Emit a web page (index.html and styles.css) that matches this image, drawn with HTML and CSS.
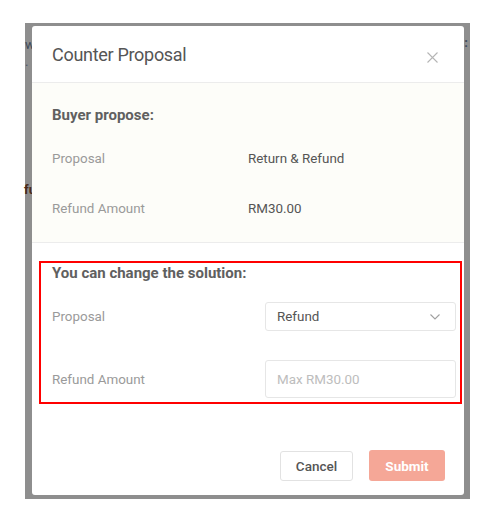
FILE: index.html
```html
<!DOCTYPE html>
<html>
<head>
<meta charset="utf-8">
<link rel="stylesheet" href="styles.css">
</head>
<body>
<div class="backdrop">
  <span class="peek peek-w">w</span>
  <span class="peek peek-dot">.</span>
  <span class="peek peek-fu">fu</span>
  <span class="peek peek-colon">:</span>
  <div class="modal">
    <div class="modal-header">
      <span class="modal-title">Counter Proposal</span>
      <svg class="close" width="11" height="11" viewBox="0 0 11 11"><path d="M0.5 0.5 L10.5 10.5 M10.5 0.5 L0.5 10.5" stroke="#b5b5b5" stroke-width="1.1" fill="none"/></svg>
    </div>
    <div class="buyer">
      <div class="heading">Buyer propose:</div>
      <div class="info-row"><span class="label">Proposal</span><span class="value">Return &amp; Refund</span></div>
      <div class="info-row"><span class="label">Refund Amount</span><span class="value">RM30.00</span></div>
    </div>
    <div class="change">
      <div class="heading">You can change the solution:</div>
      <div class="form-row row-select">
        <span class="label">Proposal</span>
        <div class="select"><span>Refund</span>
          <svg width="10" height="6" viewBox="0 0 10 6"><path d="M0.5 0.5 L5 5 L9.5 0.5" stroke="#a0a0a0" stroke-width="1.1" fill="none"/></svg>
        </div>
      </div>
      <div class="form-row row-input">
        <span class="label">Refund Amount</span>
        <div class="input">Max RM30.00</div>
      </div>
    </div>
    <div class="footer">
      <button class="btn btn-cancel">Cancel</button>
      <button class="btn btn-submit">Submit</button>
    </div>
  </div>
</div>
</body>
</html>
```

FILE: styles.css
```css
html, body {
  margin: 0;
  padding: 0;
  background: #ffffff;
}
body {
  font-family: Roboto, "Liberation Sans", Arial, sans-serif;
  width: 495px;
  height: 528px;
  overflow: hidden;
}
.backdrop {
  position: relative;
  margin: 23px 0 0 25px;
  width: 445px;
  height: 476px;
  background: #8e8e8e;
  padding: 3px 6px 0 7px;
  box-sizing: border-box;
}
.peek {
  position: absolute;
  font-size: 13px;
  line-height: 12px;
}
.peek-w {
  left: 0;
  top: 16px;
  color: #3e4a5a;
}
.peek-dot {
  left: 0;
  top: 33px;
  color: #4a5566;
}
.peek-fu {
  left: -1px;
  top: 161px;
  color: #4a2a1a;
  font-weight: 700;
}
.peek-colon {
  right: 2px;
  top: 14px;
  color: #3e4a5a;
  font-weight: 700;
}
.modal {
  position: relative;
  width: 432px;
  height: 469px;
  background: #ffffff;
  border-radius: 3px;
  display: flex;
  flex-direction: column;
}
.modal-header {
  height: 56px;
  border-bottom: 1px solid #ececec;
  display: flex;
  align-items: center;
  justify-content: space-between;
  padding: 0 26px 0 20px;
  flex-shrink: 0;
}
.modal-title {
  font-size: 18px;
  color: #555555;
  letter-spacing: -0.3px;
}
.close {
  margin-top: 6px;
}
.buyer {
  background: #fdfdf9;
  height: 160px;
  box-sizing: border-box;
  padding: 22px 20px 10px 20px;
  border-bottom: 1px solid #ececec;
  flex-shrink: 0;
}
.heading {
  font-size: 15px;
  font-weight: 700;
  color: #606060;
  line-height: 20px;
  height: 20px;
}
.buyer .heading {
  margin-bottom: 8px;
}
.info-row {
  height: 50px;
  display: flex;
  align-items: center;
  font-size: 13.4px;
}
.label {
  color: #9a9a9a;
  font-size: 13.4px;
  width: 196px;
  flex-shrink: 0;
}
.value {
  color: #555555;
}
.change {
  margin: 18px 2px 0 7px;
  border: 2px solid #ff0000;
  height: 143px;
  box-sizing: border-box;
  padding: 0 4px 0 11px;
  flex-shrink: 0;
}
.form-row {
  display: flex;
  align-items: center;
}
.form-row .label {
  width: 213px;
}
.row-select {
  margin-top: 19px;
}
.row-input {
  margin-top: 29px;
}
.select {
  flex: 1;
  height: 29px;
  border: 1px solid #e6e6e6;
  border-radius: 3px;
  box-sizing: border-box;
  display: flex;
  align-items: center;
  justify-content: space-between;
  padding: 0 15px 0 11px;
  font-size: 13.4px;
  color: #555555;
}
.input {
  flex: 1;
  height: 38px;
  border: 1px solid #e6e6e6;
  border-radius: 3px;
  box-sizing: border-box;
  display: flex;
  align-items: center;
  padding: 0 11px;
  font-size: 13.4px;
  color: #bdbdbd;
}
.footer {
  display: flex;
  justify-content: flex-end;
  gap: 16px;
  padding: 47px 19px 0 0;
}
.btn {
  font-family: Roboto, "Liberation Sans", Arial, sans-serif;
  font-size: 13.5px;
  font-weight: 500;
  height: 30px;
  border-radius: 3px;
  box-sizing: border-box;
  cursor: pointer;
}
.btn-cancel {
  width: 73px;
  background: #ffffff;
  border: 1px solid #e2e2e2;
  color: #555555;
}
.btn-submit {
  width: 76px;
  height: 31px;
  margin-top: -1px;
  background: #f5a797;
  border: none;
  color: #ffffff;
  font-weight: 700;
}
```
